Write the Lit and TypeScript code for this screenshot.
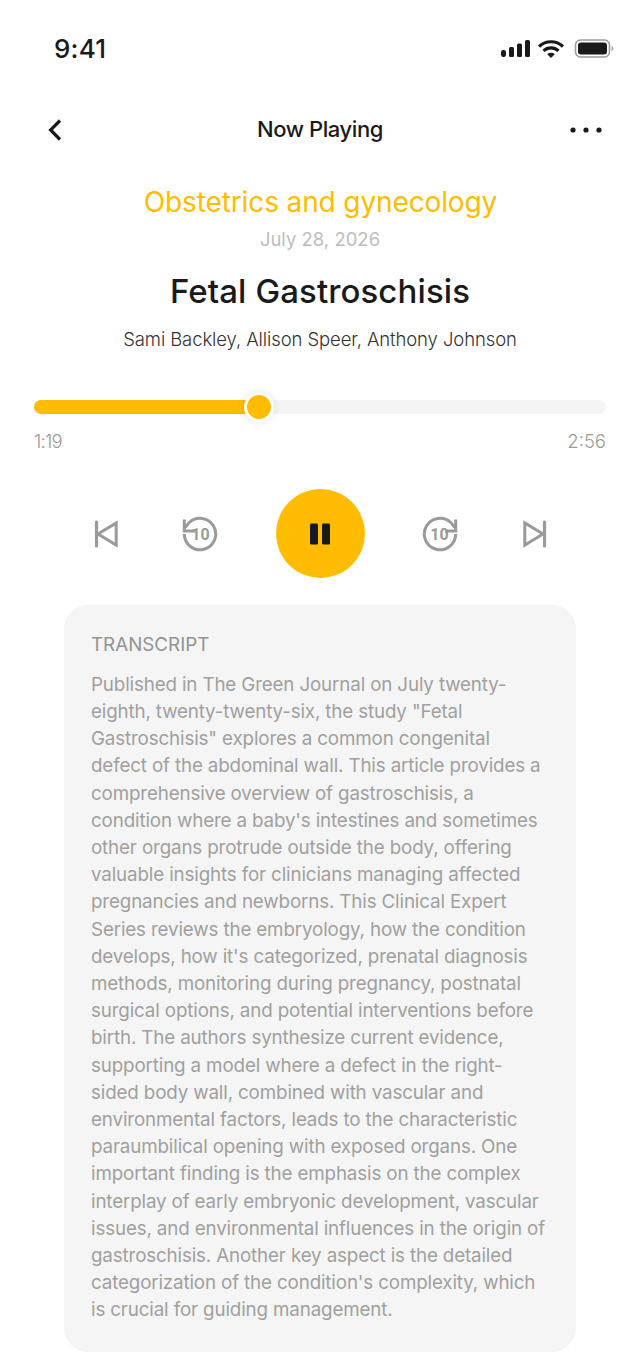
import { LitElement, html, css, svg } from 'lit';
import { customElement } from 'lit/decorators.js';

const TRANSCRIPT = [
  'Published in The Green Journal on July twenty-',
  'eighth, twenty-twenty-six, the study "Fetal',
  'Gastroschisis" explores a common congenital',
  'defect of the abdominal wall. This article provides a',
  'comprehensive overview of gastroschisis, a',
  "condition where a baby's intestines and sometimes",
  'other organs protrude outside the body, offering',
  'valuable insights for clinicians managing affected',
  'pregnancies and newborns. This Clinical Expert',
  'Series reviews the embryology, how the condition',
  "develops, how it's categorized, prenatal diagnosis",
  'methods, monitoring during pregnancy, postnatal',
  'surgical options, and potential interventions before',
  'birth. The authors synthesize current evidence,',
  'supporting a model where a defect in the right-',
  'sided body wall, combined with vascular and',
  'environmental factors, leads to the characteristic',
  'paraumbilical opening with exposed organs. One',
  'important finding is the emphasis on the complex',
  'interplay of early embryonic development, vascular',
  'issues, and environmental influences in the origin of',
  'gastroschisis. Another key aspect is the detailed',
  "categorization of the condition's complexity, which",
  'is crucial for guiding management.',
];

const replayIcon = (forward: boolean) => svg`
  <svg width="36" height="36" viewBox="0 0 36 36" fill="none">
    <g transform=${forward ? 'translate(36 0) scale(-1 1)' : 'translate(0 0)'} stroke="#9a9a98" stroke-width="3">
      <path d="M2.3 18A15.7 15.7 0 1 0 7 6.8L3 11.5"/>
      <path d="M2.3 3.5V15H13"/>
    </g>
    <text class="ten" x=${forward ? 17.5 : 18.5} y="24.2" text-anchor="middle">10</text>
  </svg>
`;

@customElement('app-root')
export class AppRoot extends LitElement {
  render() {
    return html`
      <div class="status">
        <span class="time">9:41</span>
        <svg width="113" height="20" viewBox="0 0 113 20" fill="none">
          <rect x="0" y="11" width="5" height="7" rx="2.2" fill="#1a1a1a"/>
          <rect x="8" y="8" width="5" height="10" rx="1.5" fill="#1a1a1a"/>
          <rect x="16" y="4.5" width="5" height="13.5" rx="1.5" fill="#1a1a1a"/>
          <rect x="24" y="1" width="5" height="17" rx="1.5" fill="#1a1a1a"/>
          <path d="M38 7.5a17.5 17.5 0 0 1 24 0" stroke="#1a1a1a" stroke-width="3.2"/>
          <path d="M42.5 11.8a11 11 0 0 1 15 0" stroke="#1a1a1a" stroke-width="3.2"/>
          <path d="M46.2 15.2 50 19l3.8-3.8a5.6 5.6 0 0 0-7.6 0z" fill="#1a1a1a"/>
          <rect x="74.5" y="1" width="34" height="17" rx="5" stroke="#9b9b9b" stroke-width="1.6"/>
          <rect x="77" y="3.5" width="29" height="12" rx="3" fill="#1a1a1a"/>
          <path d="M110.5 7v5c1.2-.3 2-1.4 2-2.5s-.8-2.2-2-2.5z" fill="#aaa"/>
        </svg>
      </div>

      <div class="nav">
        <svg width="16" height="24" viewBox="0 0 16 24" fill="none">
          <path d="M13 2.5 3.6 12l9.4 9.5" stroke="#1a1a1a" stroke-width="3.2"/>
        </svg>
        <span class="nav-title">Now Playing</span>
        <svg width="32" height="6" viewBox="0 0 32 6" fill="#1a1a1a">
          <circle cx="3" cy="3" r="2.6"/><circle cx="16" cy="3" r="2.6"/><circle cx="29" cy="3" r="2.6"/>
        </svg>
      </div>

      <div class="meta">
        <div class="category">Obstetrics and gynecology</div>
        <div class="date">July 28, 2026</div>
        <div class="title">Fetal Gastroschisis</div>
        <div class="authors">Sami Backley, Allison Speer, Anthony Johnson</div>
      </div>

      <div class="player">
        <div class="track">
          <div class="fill"></div>
          <div class="knob"></div>
        </div>
        <div class="times"><span class="elapsed">1:19</span><span>2:56</span></div>
      </div>

      <div class="controls">
        <svg class="skip-prev" width="28" height="28" viewBox="0 0 28 28" fill="none">
          <path d="M3.5 2V26" stroke="#9a9a98" stroke-width="3.2" stroke-linecap="round"/>
          <path d="M23.2 3V25L5 14z" stroke="#9a9a98" stroke-width="3"/>
        </svg>
        ${replayIcon(false)}
        <div class="play">
          <svg width="22" height="22" viewBox="0 0 22 22" fill="#1a1a1a">
            <rect x="1" y="0.5" width="8" height="21" rx="1.2"/>
            <rect x="13" y="0.5" width="8" height="21" rx="1.2"/>
          </svg>
        </div>
        ${replayIcon(true)}
        <svg class="skip-next" width="28" height="28" viewBox="0 0 28 28" fill="none">
          <path d="M24.5 2V26" stroke="#9a9a98" stroke-width="3.2" stroke-linecap="round"/>
          <path d="M4.8 3V25L23 14z" stroke="#9a9a98" stroke-width="3"/>
        </svg>
      </div>

      <div class="card">
        <div class="card-head">TRANSCRIPT</div>
        <div class="card-body">
          ${TRANSCRIPT.map(line => html`<div>${line}</div>`)}
        </div>
      </div>
    `;
  }

  static styles = css`
    :host {
      display: block;
      width: 640px;
      height: 1352px;
      overflow: hidden;
      background: #fff;
      font-family: 'Inter', 'Liberation Sans', sans-serif;
      color: #1a1a1a;
    }

    .status {
      height: 64px;
      padding: 33px 26px 0 54px;
      box-sizing: border-box;
      display: flex;
      justify-content: space-between;
      align-items: flex-start;
    }
    .status svg { margin-top: 6px; }

    .time {
      font-size: 26px;
      line-height: 32px;
      font-weight: 500;
      letter-spacing: 0.2px;
    }

    .nav {
      height: 44px;
      margin-top: 44px;
      padding: 0 38px 0 47px;
      display: flex;
      align-items: center;
      justify-content: space-between;
      position: relative;
    }

    .nav-title {
      position: absolute;
      left: 0;
      right: 0;
      padding-bottom: 2px;
      text-align: center;
      font-size: 22px;
      line-height: 28px;
      font-weight: 500;
      letter-spacing: -0.4px;
    }

    .meta {
      display: flex;
      flex-direction: column;
      align-items: center;
      margin-top: 32px;
    }

    .category {
      font-size: 28px;
      line-height: 36px;
      color: #ffbc00;
      letter-spacing: -0.12px;
      padding-left: 1px;
    }

    .date {
      margin-top: 6px;
      font-size: 18.5px;
      line-height: 26px;
      color: #bdbdbb;
    }

    .title {
      margin-top: 18px;
      font-size: 33px;
      line-height: 42px;
      font-weight: 500;
      letter-spacing: 0.1px;
    }

    .authors {
      margin-top: 14px;
      font-size: 18.5px;
      line-height: 26px;
      font-weight: 300;
      letter-spacing: -0.1px;
      color: #333;
    }

    .player {
      margin-top: 48px;
      padding: 0 34px;
    }

    .track {
      height: 14px;
      border-radius: 7px;
      background: #f4f4f4;
      position: relative;
    }

    .fill {
      width: 226px;
      height: 100%;
      border-radius: 7px;
      background: #ffbc00;
    }

    .knob {
      position: absolute;
      left: 210px;
      top: -8px;
      width: 24px;
      height: 24px;
      border: 3px solid #fff;
      border-radius: 50%;
      background: #ffbc00;
      box-shadow: 0 0 10px rgba(0, 0, 0, 0.1);
    }

    .times {
      margin-top: 14px;
      display: flex;
      justify-content: space-between;
      font-size: 18.5px;
      line-height: 26px;
      font-weight: 300;
      color: #9a9a98;
    }

    .elapsed { letter-spacing: -0.8px; }

    .controls {
      margin-top: 35px;
      display: flex;
      align-items: center;
      justify-content: center;
      gap: 57.5px;
    }

    .skip-prev { margin-right: 4px; }
    .skip-next { margin-left: 4px; }

    .ten {
      font-family: 'Roboto', 'Liberation Sans', sans-serif;
      font-size: 16px;
      font-weight: 700;
      fill: #9a9a98;
    }

    .play {
      width: 89px;
      height: 89px;
      border-radius: 50%;
      background: #ffbc00;
      display: flex;
      align-items: center;
      justify-content: center;
    }

    .card {
      margin: 27px 64px 0;
      height: 747px;
      box-sizing: border-box;
      padding: 26px 27px 0;
      border-radius: 24px;
      background: #f5f5f6;
      color: #a0a09e;
      font-size: 18.8px;
      line-height: 27.2px;
    }

    .card-head { color: #939391; }

    .card-body {
      margin-top: 12.5px;
      white-space: nowrap;
      letter-spacing: -0.15px;
    }
  `;
}
